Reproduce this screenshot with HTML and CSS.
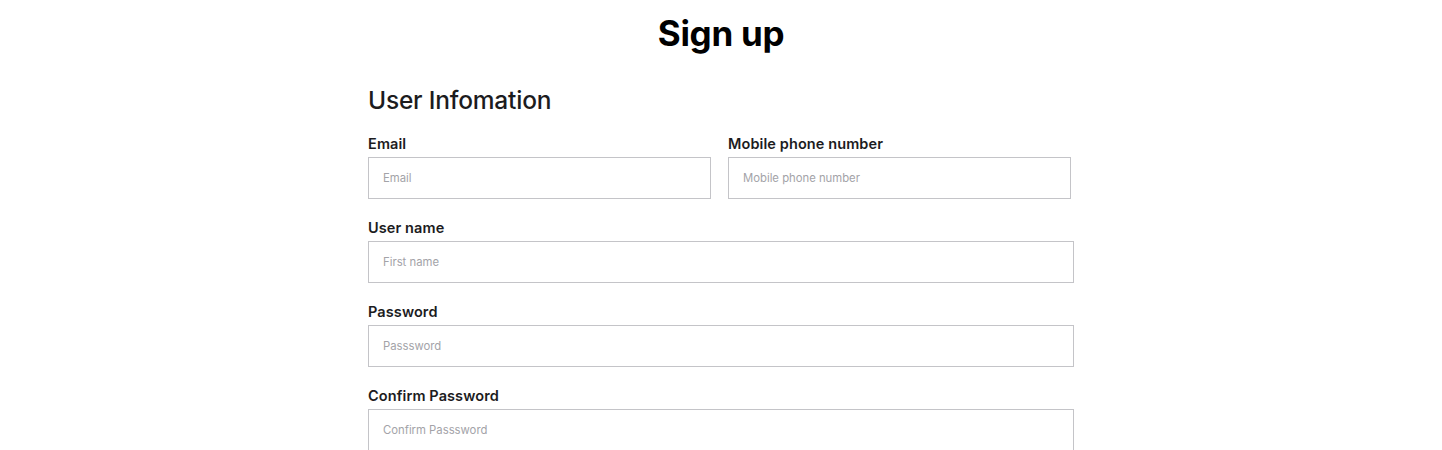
FILE: index.html
```html
<!DOCTYPE html>
<html>
<head>
<meta charset="utf-8">
<link rel="stylesheet" href="styles.css">
</head>
<body>
<main class="page">
  <h1 class="title">Sign up</h1>
  <form class="form">
    <h2 class="section">User Infomation</h2>
    <div class="row two">
      <div class="field">
        <label class="label">Email</label>
        <input class="input" type="text" placeholder="Email">
      </div>
      <div class="field">
        <label class="label">Mobile phone number</label>
        <input class="input" type="text" placeholder="Mobile phone number">
      </div>
    </div>
    <div class="field">
      <label class="label">User name</label>
      <input class="input" type="text" placeholder="First name">
    </div>
    <div class="field">
      <label class="label">Password</label>
      <input class="input" type="password" placeholder="Passsword">
    </div>
    <div class="field">
      <label class="label">Confirm Password</label>
      <input class="input" type="password" placeholder="Confirm Passsword">
    </div>
  </form>
</main>
</body>
</html>
```
FILE: styles.css
```css
* { box-sizing: border-box; }
body {
  margin: 0;
  background: #fff;
  font-family: Inter, "Liberation Sans", sans-serif;
  color: #1c1c1e;
}
.page {
  display: flex;
  flex-direction: column;
  align-items: center;
}
.title {
  margin: 12px 0 0;
  font-size: 35px;
  font-weight: 700;
  line-height: 42px;
  color: #000;
  letter-spacing: -0.3px;
}
.form {
  width: 706px;
  display: flex;
  flex-direction: column;
  gap: 19px;
}
.section {
  margin: 31px 0 0;
  font-size: 24.5px;
  font-weight: 500;
  line-height: 30px;
  letter-spacing: -0.2px;
}
.row.two {
  display: grid;
  grid-template-columns: 343px 343px;
  column-gap: 17px;
}
.field {
  display: flex;
  flex-direction: column;
  gap: 3px;
}
.label {
  font-size: 14.5px;
  font-weight: 600;
  line-height: 20px;
  color: #1c1c1e;
  letter-spacing: 0.1px;
}
.input {
  height: 42px;
  width: 100%;
  border: 1px solid #c4c4c8;
  border-radius: 0;
  padding: 0 14px;
  font-family: Inter, "Liberation Sans", sans-serif;
  font-size: 11.3px;
  outline: none;
  background: #fff;
}
.input::placeholder { color: #a3a3a8; }
```
